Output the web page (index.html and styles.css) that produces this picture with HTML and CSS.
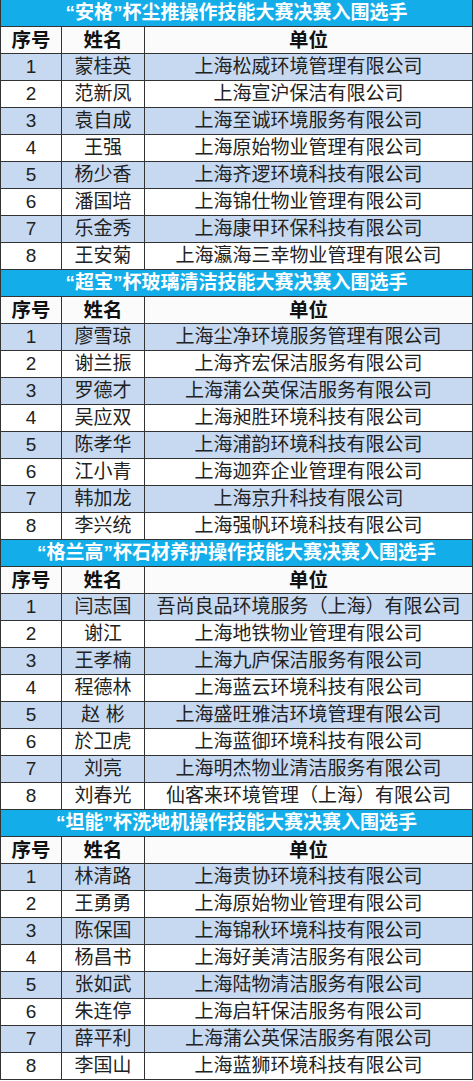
FILE: index.html
```html
<!DOCTYPE html>
<html lang="zh-CN">
<head>
<meta charset="utf-8">
<title>决赛入围选手</title>
<link rel="stylesheet" href="styles.css">
</head>
<body>
<div class="sheet">
  <section class="block">
    <div class="title">“安格”杯尘推操作技能大赛决赛入围选手</div>
    <div class="row head"><div class="c">序号</div><div class="c">姓名</div><div class="c">单位</div></div>
    <div class="row odd"><div class="c">1</div><div class="c">蒙桂英</div><div class="c">上海松威环境管理有限公司</div></div>
    <div class="row"><div class="c">2</div><div class="c">范新凤</div><div class="c">上海宣沪保洁有限公司</div></div>
    <div class="row odd"><div class="c">3</div><div class="c">袁自成</div><div class="c">上海至诚环境服务有限公司</div></div>
    <div class="row"><div class="c">4</div><div class="c">王强</div><div class="c">上海原始物业管理有限公司</div></div>
    <div class="row odd"><div class="c">5</div><div class="c">杨少香</div><div class="c">上海齐逻环境科技有限公司</div></div>
    <div class="row"><div class="c">6</div><div class="c">潘国培</div><div class="c">上海锦仕物业管理有限公司</div></div>
    <div class="row odd"><div class="c">7</div><div class="c">乐金秀</div><div class="c">上海康甲环保科技有限公司</div></div>
    <div class="row"><div class="c">8</div><div class="c">王安菊</div><div class="c">上海瀛海三幸物业管理有限公司</div></div>
  </section>
  <section class="block">
    <div class="title">“超宝”杯玻璃清洁技能大赛决赛入围选手</div>
    <div class="row head"><div class="c">序号</div><div class="c">姓名</div><div class="c">单位</div></div>
    <div class="row odd"><div class="c">1</div><div class="c">廖雪琼</div><div class="c">上海尘净环境服务管理有限公司</div></div>
    <div class="row"><div class="c">2</div><div class="c">谢兰振</div><div class="c">上海齐宏保洁服务有限公司</div></div>
    <div class="row odd"><div class="c">3</div><div class="c">罗德才</div><div class="c">上海蒲公英保洁服务有限公司</div></div>
    <div class="row"><div class="c">4</div><div class="c">吴应双</div><div class="c">上海昶胜环境科技有限公司</div></div>
    <div class="row odd"><div class="c">5</div><div class="c">陈孝华</div><div class="c">上海浦韵环境科技有限公司</div></div>
    <div class="row"><div class="c">6</div><div class="c">江小青</div><div class="c">上海迦弈企业管理有限公司</div></div>
    <div class="row odd"><div class="c">7</div><div class="c">韩加龙</div><div class="c">上海京升科技有限公司</div></div>
    <div class="row"><div class="c">8</div><div class="c">李兴统</div><div class="c">上海强帆环境科技有限公司</div></div>
  </section>
  <section class="block">
    <div class="title">“格兰高”杯石材养护操作技能大赛决赛入围选手</div>
    <div class="row head"><div class="c">序号</div><div class="c">姓名</div><div class="c">单位</div></div>
    <div class="row odd"><div class="c">1</div><div class="c">闫志国</div><div class="c">吾尚良品环境服务（上海）有限公司</div></div>
    <div class="row"><div class="c">2</div><div class="c">谢江</div><div class="c">上海地铁物业管理有限公司</div></div>
    <div class="row odd"><div class="c">3</div><div class="c">王孝楠</div><div class="c">上海九庐保洁服务有限公司</div></div>
    <div class="row"><div class="c">4</div><div class="c">程德林</div><div class="c">上海蓝云环境科技有限公司</div></div>
    <div class="row odd"><div class="c">5</div><div class="c">赵 彬</div><div class="c">上海盛旺雅洁环境管理有限公司</div></div>
    <div class="row"><div class="c">6</div><div class="c">於卫虎</div><div class="c">上海蓝御环境科技有限公司</div></div>
    <div class="row odd"><div class="c">7</div><div class="c">刘亮</div><div class="c">上海明杰物业清洁服务有限公司</div></div>
    <div class="row"><div class="c">8</div><div class="c">刘春光</div><div class="c">仙客来环境管理（上海）有限公司</div></div>
  </section>
  <section class="block">
    <div class="title">“坦能”杯洗地机操作技能大赛决赛入围选手</div>
    <div class="row head"><div class="c">序号</div><div class="c">姓名</div><div class="c">单位</div></div>
    <div class="row odd"><div class="c">1</div><div class="c">林清路</div><div class="c">上海贵协环境科技有限公司</div></div>
    <div class="row"><div class="c">2</div><div class="c">王勇勇</div><div class="c">上海原始物业管理有限公司</div></div>
    <div class="row odd"><div class="c">3</div><div class="c">陈保国</div><div class="c">上海锦秋环境科技有限公司</div></div>
    <div class="row"><div class="c">4</div><div class="c">杨昌书</div><div class="c">上海好美清洁服务有限公司</div></div>
    <div class="row odd"><div class="c">5</div><div class="c">张如武</div><div class="c">上海陆物清洁服务有限公司</div></div>
    <div class="row"><div class="c">6</div><div class="c">朱连停</div><div class="c">上海启轩保洁服务有限公司</div></div>
    <div class="row odd"><div class="c">7</div><div class="c">薛平利</div><div class="c">上海蒲公英保洁服务有限公司</div></div>
    <div class="row"><div class="c">8</div><div class="c">李国山</div><div class="c">上海蓝狮环境科技有限公司</div></div>
  </section>
</div>
</body>
</html>
```

FILE: styles.css
```css
html, body {
  margin: 0;
  padding: 0;
  background: #ffffff;
}

.sheet {
  width: 473px;
  box-sizing: border-box;
  border-left: 1px solid #333;
  border-right: 1px solid #333;
  font-family: "Liberation Sans", "Noto Sans CJK SC", sans-serif;
  color: #222;
}

.block {
  display: flex;
  flex-direction: column;
}

.title {
  height: 26px;
  border-bottom: 1px solid #333;
  background: #13aeea;
  color: #ffffff;
  font-weight: bold;
  font-size: 19px;
  line-height: 26px;
  text-align: center;
  white-space: nowrap;
}

.row {
  display: grid;
  grid-template-columns: 61px 83px 1fr;
  height: 26px;
  border-bottom: 1px solid #333;
  background: #ffffff;
}

.row.odd {
  background: #c6d9f1;
}

.c {
  border-right: 1px solid #333;
  font-size: 19px;
  line-height: 26px;
  text-align: center;
  white-space: nowrap;
  overflow: hidden;
}

.c:last-child {
  border-right: none;
}

.head {
  background: #fbfbfb;
}

.head .c {
  font-weight: bold;
  font-size: 19.5px;
  color: #111;
}
```
